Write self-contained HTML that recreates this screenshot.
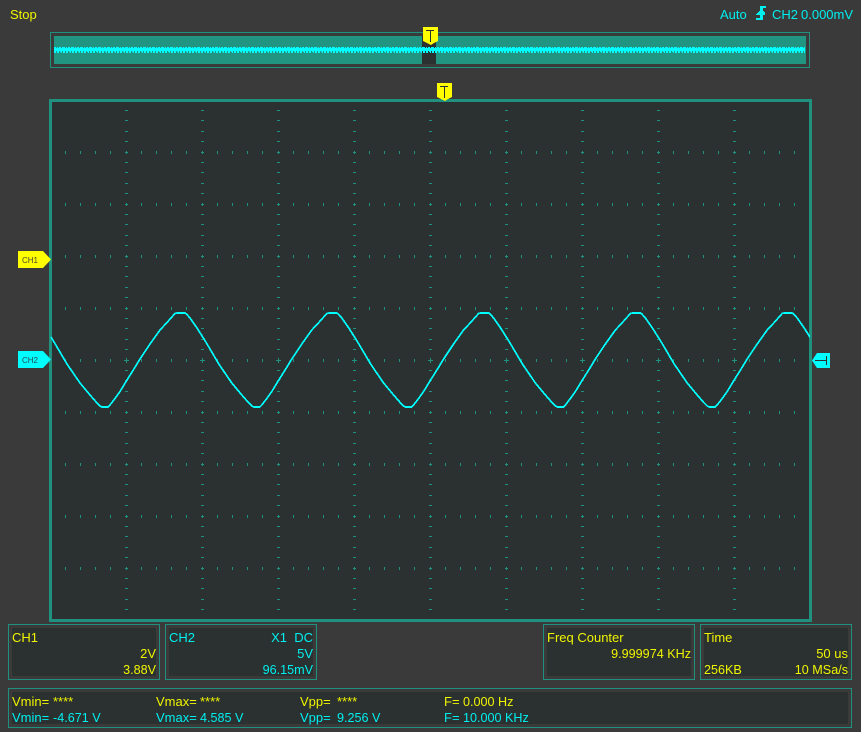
<!DOCTYPE html>
<html><head><meta charset="utf-8"><style>
html,body{margin:0;padding:0;background:#3a3a3a;width:861px;height:732px;overflow:hidden}
svg{display:block}
text{font-family:"Liberation Sans",sans-serif;font-size:13px}
text.d{font-size:12.6px}
.y{fill:#f0f500}.c{fill:#00f0f0}.e{text-anchor:end}
.b{fill:none;stroke:#21917f;stroke-width:1}.i{fill:#2b3030}
.w{fill:none;stroke:#00ffff;stroke-width:1.7;shape-rendering:crispEdges}
</style></head><body>
<svg width="861" height="732" viewBox="0 0 861 732" xmlns="http://www.w3.org/2000/svg">
<defs>
<pattern id="h" x="50" y="152" width="76" height="52" patternUnits="userSpaceOnUse">
<rect x="15" y="0" width="1" height="2" fill="#21917f"/><rect x="30" y="0" width="1" height="2" fill="#21917f"/><rect x="45" y="0" width="1" height="2" fill="#21917f"/><rect x="60" y="0" width="1" height="2" fill="#21917f"/>
<rect x="15" y="51" width="1" height="1" fill="#21917f"/><rect x="30" y="51" width="1" height="1" fill="#21917f"/><rect x="45" y="51" width="1" height="1" fill="#21917f"/><rect x="60" y="51" width="1" height="1" fill="#21917f"/>
</pattern>
<pattern id="v" x="50" y="152" width="76" height="52" patternUnits="userSpaceOnUse">
<g fill="#21917f"><rect x="75" y="10" width="1" height="1"/><rect x="75" y="20" width="1" height="1"/><rect x="75" y="31" width="1" height="1"/><rect x="75" y="41" width="1" height="1"/>
<rect x="0" y="10" width="2" height="1"/><rect x="0" y="20" width="2" height="1"/><rect x="0" y="31" width="2" height="1"/><rect x="0" y="41" width="2" height="1"/>
<rect x="75" y="0" width="1" height="1"/><rect x="0" y="0" width="2" height="1"/><rect x="0" y="1" width="1" height="1"/><rect x="0" y="51" width="1" height="1"/></g>
</pattern>
<pattern id="n" x="54" y="47" width="9" height="6" patternUnits="userSpaceOnUse">
<g fill="#00ffff"><rect x="0" y="1" width="9" height="3"/><rect x="0" y="4" width="2" height="2"/><rect x="3" y="4" width="2" height="2"/><rect x="6" y="4" width="1" height="1"/><rect x="7" y="4" width="1" height="2"/><rect x="0" y="0" width="2" height="1"/><rect x="3" y="0" width="1" height="1"/><rect x="5" y="0" width="2" height="1"/><rect x="8" y="0" width="1" height="1"/></g>
</pattern>
<polyline id="p" class="w" points="51,337 57,347 67,364 80,383 90,395 97,403 100,406 102,407 108,407 110,405 115,398.500 120,391.500 127,380 133,370.500 140,359 145,351.500 150,344 160,330 167,322.500 175,313.500 177,313 185,313 186.500,314 190,318 197,328 203,337.500"/>
<clipPath id="pc"><rect x="50" y="102" width="760" height="517"/></clipPath>
</defs>

<!-- status -->
<text x="10" y="19" class="y">Stop</text>
<text x="720" y="19" class="c">Auto</text>
<g fill="#00f0f0"><rect x="761" y="6" width="5" height="2"/><rect x="760" y="6" width="3" height="14"/><rect x="759" y="11" width="5" height="1"/><rect x="758" y="12" width="7" height="1"/><rect x="757" y="13" width="8" height="1"/><rect x="756" y="14" width="9" height="1"/><rect x="756" y="18" width="7" height="2"/></g>
<text x="772" y="19" class="c">CH2</text>
<text x="801" y="19" class="c">0.000mV</text>

<!-- overview -->
<rect x="50.500" y="32.500" width="759" height="35" class="b"/>
<rect x="54" y="36" width="752" height="28" fill="#219482"/>
<rect x="422" y="36" width="14" height="28" class="i"/>
<rect x="54" y="47" width="751" height="6" fill="url(#n)"/>
<path d="M423 27H438V41L434 43 431 45 427 43 423 41Z" fill="#ffff00"/>
<path d="M426 30.500H434M430.500 30.500V42" stroke="#2b3030" stroke-width="1" fill="none"/>

<!-- plot -->
<rect x="50.500" y="100.500" width="760" height="520" class="i" stroke="#21917f" stroke-width="3"/>
<rect x="52" y="102" width="757" height="517" fill="url(#h)"/>
<rect x="52" y="102" width="757" height="517" fill="url(#v)"/>
<g fill="#21917f">
<rect x="124" y="360" width="5" height="1"/><rect x="126" y="358" width="1" height="5"/>
<rect x="200" y="360" width="5" height="1"/><rect x="202" y="358" width="1" height="5"/>
<rect x="276" y="360" width="5" height="1"/><rect x="278" y="358" width="1" height="5"/>
<rect x="352" y="360" width="5" height="1"/><rect x="354" y="358" width="1" height="5"/>
<rect x="428" y="360" width="5" height="1"/><rect x="430" y="358" width="1" height="5"/>
<rect x="504" y="360" width="5" height="1"/><rect x="506" y="358" width="1" height="5"/>
<rect x="580" y="360" width="5" height="1"/><rect x="582" y="358" width="1" height="5"/>
<rect x="656" y="360" width="5" height="1"/><rect x="658" y="358" width="1" height="5"/>
<rect x="732" y="360" width="5" height="1"/><rect x="734" y="358" width="1" height="5"/>
</g>
<g clip-path="url(#pc)">
<use href="#p"/><use href="#p" x="151.800"/><use href="#p" x="303.600"/><use href="#p" x="455.400"/><use href="#p" x="607.200"/>
</g>

<!-- markers -->
<path d="M437 83H452V97L448 99 445 101 441 99 437 97Z" fill="#ffff00"/>
<path d="M440 86.500H448M444.500 86.500V98" stroke="#2b3030" stroke-width="1" fill="none"/>
<path d="M18 251H43L51 259.500 43 268H18Z" fill="#ffff00"/>
<text x="22" y="263" style="font-size:8px" fill="#4a4a30">CH1</text>
<path d="M18 351H43L51 359.500 43 368H18Z" fill="#00ffff"/>
<text x="22" y="363" style="font-size:8px" fill="#2a4a55">CH2</text>
<path d="M830 353V368H817L812 360.500 817 353Z" fill="#00ffff"/>
<path d="M815 360.500H826M826.500 356V365" stroke="#2b3030" stroke-width="1" fill="none"/>

<!-- panels -->
<rect x="8.500" y="624.500" width="151" height="55" class="b"/><rect x="12" y="628" width="144" height="48" class="i"/>
<rect x="165.500" y="624.500" width="151" height="55" class="b"/><rect x="169" y="628" width="144" height="48" class="i"/>
<rect x="543.500" y="624.500" width="151" height="55" class="b"/><rect x="547" y="628" width="144" height="48" class="i"/>
<rect x="700.500" y="624.500" width="151" height="55" class="b"/><rect x="704" y="628" width="144" height="48" class="i"/>
<rect x="8.500" y="688.500" width="843" height="39" class="b"/><rect x="12" y="692" width="836" height="32" class="i"/>

<text x="12" y="642" class="y">CH1</text>
<text x="156" y="658" class="y e">2V</text>
<text x="156" y="674" class="y e d">3.88V</text>

<text x="169" y="642" class="c">CH2</text>
<text x="287" y="642" class="c e">X1</text>
<text x="313" y="642" class="c e">DC</text>
<text x="313" y="658" class="c e">5V</text>
<text x="313" y="674" class="c e d">96.15mV</text>

<text x="547" y="642" class="y">Freq Counter</text>
<text x="691" y="658" class="y e d">9.999974 KHz</text>

<text x="704" y="642" class="y">Time</text>
<text x="848" y="658" class="y e">50 us</text>
<text x="704" y="674" class="y d">256KB</text>
<text x="848" y="674" class="y e d">10 MSa/s</text>

<text x="12" y="706" class="y">Vmin=</text><text x="53" y="706" class="y">****</text>
<text x="12" y="722" class="c">Vmin=</text><text x="53" y="722" class="c d">-4.671 V</text>
<text x="156" y="706" class="y">Vmax=</text><text x="200" y="706" class="y">****</text>
<text x="156" y="722" class="c">Vmax=</text><text x="200" y="722" class="c d">4.585 V</text>
<text x="300" y="706" class="y">Vpp=</text><text x="337" y="706" class="y">****</text>
<text x="300" y="722" class="c">Vpp=</text><text x="337" y="722" class="c d">9.256 V</text>
<text x="444" y="706" class="y">F=</text><text x="463" y="706" class="y d">0.000 Hz</text>
<text x="444" y="722" class="c">F=</text><text x="463" y="722" class="c d">10.000 KHz</text>
</svg>
</body></html>
